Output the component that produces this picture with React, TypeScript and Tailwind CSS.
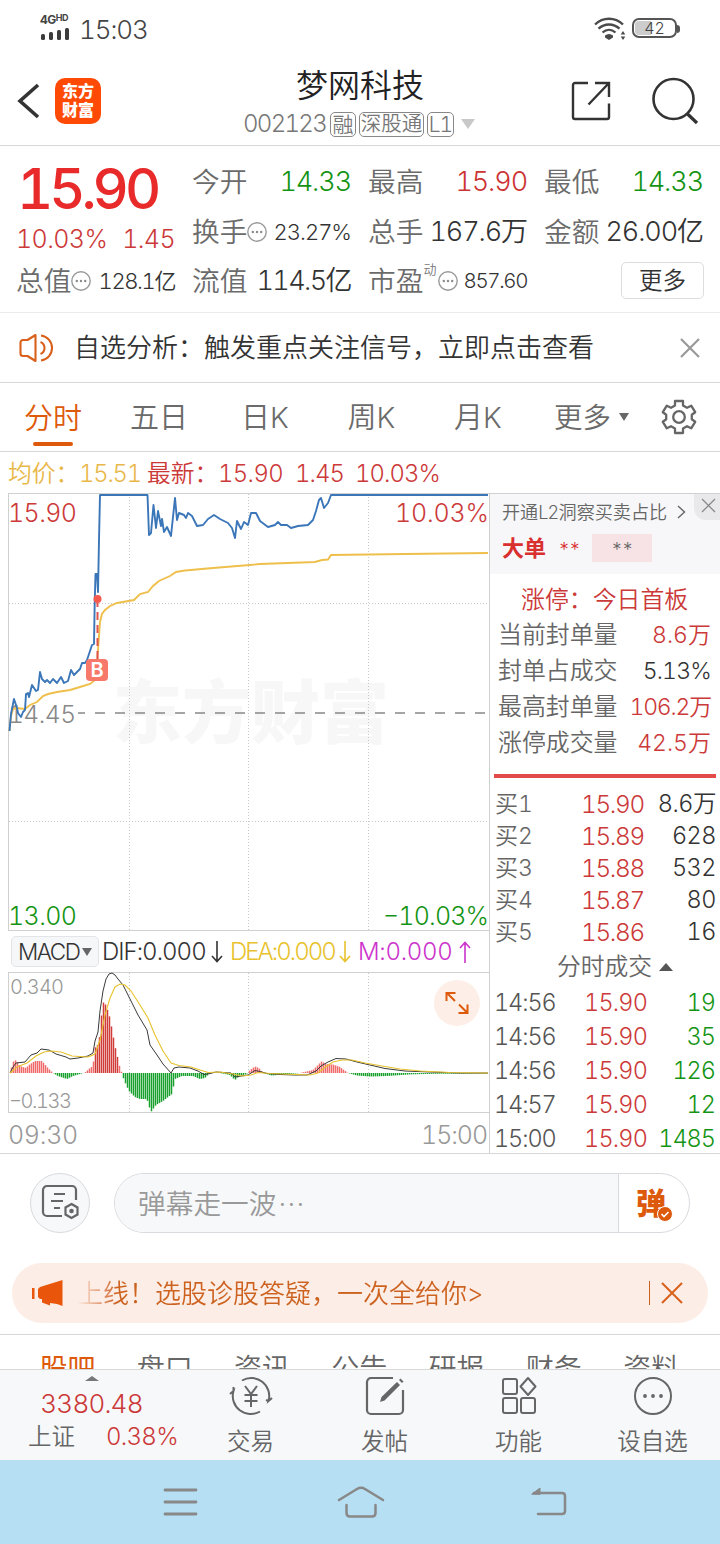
import React from 'react';

type Pt = [number, number];

const toPath = (pts: Pt[]) => pts.map(([x, y], i) => `${i ? 'L' : 'M'}${x} ${y}`).join('');

const PRICE: Pt[] = [
  [9.5, 731], [11, 714], [14, 699], [17, 708], [18, 713], [21, 717], [23, 712], [25, 710], [26, 694], [28, 693],
  [29, 697], [32, 685], [36, 691], [38, 690], [40, 672], [42, 679], [45, 682], [47, 680], [50, 683], [53, 679],
  [57, 683], [61, 677], [64, 683], [68, 681], [71, 670], [74, 675], [80, 669], [82, 663], [85, 663], [87, 660],
  [92, 645], [94, 644], [94.7, 603], [95.5, 574], [97, 574], [98, 592], [99, 540], [100, 495], [147.5, 495],
  [149, 535], [151, 533], [153.5, 505], [156, 528], [158, 511], [161, 526], [162, 519], [164, 532], [167, 527],
  [171, 536], [175, 498], [177, 520], [179, 513], [184, 515], [186, 518], [188, 513], [192, 516], [197, 526],
  [203, 525], [208, 519], [214, 515], [220, 519], [228, 523], [232, 528], [235, 538], [237, 521], [241, 529],
  [244, 522], [248, 525], [251, 513], [256, 513], [260, 521], [268, 527], [275, 525], [278, 522], [281, 525],
  [287, 525], [291, 528], [298, 526], [308, 525], [313, 520], [316, 511], [319, 500], [321, 498], [324, 508],
  [328, 503], [331, 495], [488, 495],
];

const AVERAGE: Pt[] = [
  [9.5, 731], [11, 716], [13, 709], [16, 708], [25, 709], [30, 705], [37, 702], [43, 696], [48, 694], [57, 692],
  [70, 690], [80, 687], [90, 684], [95, 680], [97, 665], [98, 650], [100, 622], [102, 614], [105, 610],
  [110, 606], [117, 603], [134, 600], [140, 594], [148, 592], [153, 586], [159, 581], [170, 576], [176, 572],
  [185, 570.5], [213, 568], [250, 565], [260, 564], [315, 562], [322, 560], [328, 559.5], [331, 555],
  [405, 554], [488, 553],
];

const DIF: Pt[] = [
  [10, 1073], [13, 1067], [16, 1063], [25, 1062], [31, 1055], [37, 1053], [41, 1049], [49, 1050], [56, 1054],
  [66, 1057], [70, 1059], [78, 1058], [88, 1056], [93, 1053], [95, 1041], [98, 1032], [100, 1011], [103, 991],
  [106, 979], [109, 974], [112, 973], [115, 975], [118, 979], [123, 985], [130, 999], [138, 1015], [147, 1030],
  [150, 1045], [157, 1055], [163, 1064], [171, 1073], [174, 1068], [179, 1067], [190, 1068], [198, 1071],
  [204, 1074.5], [210, 1073.5], [216, 1072], [231, 1073], [235, 1077], [248, 1075], [255, 1070.5], [260, 1071.5],
  [267, 1073.5], [280, 1074.5], [295, 1075], [307, 1075], [316, 1071], [321, 1066], [328, 1062], [336, 1058.5],
  [346, 1059], [357, 1062], [370, 1065], [385, 1068.5], [405, 1071], [430, 1072], [460, 1073], [488, 1073],
];

const DEA: Pt[] = [
  [10, 1073], [17, 1067], [27, 1063], [36, 1056], [44, 1052], [51, 1051], [61, 1052], [72, 1056], [88, 1057],
  [95, 1054], [100, 1040], [105, 1015], [110, 998], [115, 987], [120, 984], [125, 985], [131, 991], [140, 1005],
  [148, 1018], [155, 1035], [163, 1051], [171, 1063], [179, 1065.5], [191, 1067], [200, 1070], [208, 1072.5],
  [220, 1072], [233, 1074], [242, 1076], [251, 1075], [258, 1072.5], [270, 1073.5], [295, 1074.5], [310, 1075],
  [318, 1073], [324, 1068], [333, 1062], [342, 1060], [352, 1060], [365, 1063], [382, 1066], [400, 1069],
  [420, 1071], [450, 1072.5], [488, 1073],
];

// Histogram envelope: x position and signed height above the zero line.
const ENVELOPE: Pt[] = [
  [10, 0], [13, 11], [16, 13], [20, 7], [26, 5], [29, 8], [35, 12], [42, 12], [48, 5], [53, 0], [58, -3], [67, -6],
  [73, -3], [80, -1], [85, 0.4], [90, 5], [93, 7], [95, 25], [99, 30], [101, 53], [103, 71], [106, 68], [110, 55],
  [115, 27], [120, 5], [122, 0], [124, -7], [129, -18], [135, -24], [140, -26], [147, -26], [149, -33],
  [151, -39], [156, -32], [163, -28], [172, -21], [175, -6], [182, -3], [193, -3], [200, -6], [205, -5], [210, 0],
  [220, 0], [230, -2], [235, -7], [239, -3], [247, -1], [250, 3], [255, 6.5], [259, 5], [263, 0], [272, -2.5],
  [283, -1.5], [300, 0], [313, 3], [318, 8], [322, 12], [325, 9], [333, 8.5], [340, 6], [348, 0], [357, -2.5],
  [370, -3.5], [387, -3], [410, -1.4], [433, -0.8], [488, -0.4],
];

const heightAt = (x: number) => {
  for (let i = 1; i < ENVELOPE.length; i++) {
    const [x0, y0] = ENVELOPE[i - 1];
    const [x1, y1] = ENVELOPE[i];
    if (x <= x1) return y0 + ((y1 - y0) * (x - x0)) / (x1 - x0);
  }
  return 0;
};

const BARS = Array.from({ length: 239 }, (_, i) => 11.5 + i * 2).map((x) => ({ x, h: heightAt(x) }));

const VLINES = [129.5, 248.5, 368.5];

function InfoDot() {
  return (
    <svg className="size-5 shrink-0" viewBox="0 0 20 20">
      <circle cx="10" cy="10" r="9.2" fill="none" stroke="#9a9a9a" strokeWidth="1.4" />
      <g fill="#8a8a8a">
        <circle cx="5.8" cy="10" r="1.2" />
        <circle cx="10" cy="10" r="1.2" />
        <circle cx="14.2" cy="10" r="1.2" />
      </g>
    </svg>
  );
}

function StatusBar() {
  return (
    <div className="flex h-[57px] items-center px-[40px] text-[#444]">
      <div className="flex w-[32px] flex-col pb-[2px]">
        <div className="flex h-[12px] items-start text-[12px] leading-[12px] font-bold tracking-[-0.500px]">
          4G<span className="text-[9px] leading-[8px]">HD</span>
        </div>
        <svg className="mt-px h-[14px] w-[30px]" viewBox="0 0 30 14">
          <g fill="#3c3c3c">
            <rect x="1" y="7" width="4" height="6" rx="1.5" />
            <rect x="9" y="5" width="4" height="8" rx="1.5" />
            <rect x="17" y="3" width="4" height="10" rx="1.5" />
            <rect x="25" y="1" width="4" height="12" rx="1.5" />
          </g>
        </svg>
      </div>
      <span className="ml-[7px] pt-[3px] text-[26px] leading-8 tracking-[-1.100px]">15:03</span>
      <svg className="ml-auto h-6 w-[34px]" viewBox="0 0 34 24">
        <g fill="none" stroke="#4a4a4a" strokeWidth="2.300">
          <path d="M2 7.500C10 -.2 22 -.2 30 7.500" />
          <path d="M5.500 11.700c6-5.600 15-5.600 21 0" />
          <path d="M9.500 15.500c4-3.600 9-3.600 13 0" />
        </g>
        <path d="M12 18.500c2.500-2 5.500-2 8 0v2L16 23l-4-2.500z" fill="#4a4a4a" />
        <path d="M30 14l2.300 3.500h-4.600zM30 23l2.300-3.500h-4.600z" fill="#4a4a4a" />
      </svg>
      <div className="-mt-px ml-[5px] flex h-5 w-[45px] items-center rounded-[7px] border-2 border-[#555] p-px">
        <div className="flex h-full w-full items-center justify-center rounded-[4px] bg-linear-to-r from-[#ccc] from-40% to-white to-40% text-[16px] leading-4">
          42
        </div>
      </div>
      <div className="h-2 w-[3px] rounded-r bg-[#555]" />
    </div>
  );
}

function Header() {
  return (
    <div className="flex h-[89px] items-center border-b border-[#d8d8d8]">
      <svg className="ml-[16px] h-9 w-6" viewBox="0 0 24 36">
        <path d="M22 2L4 18l18 16" fill="none" stroke="#333" strokeWidth="3.600" />
      </svg>
      <div className="ml-[15px] flex h-[46px] w-[46px] flex-col items-center justify-center rounded-[10px] bg-[#ff4a05] text-[16px] leading-[19px] font-black text-white">
        <span>东方</span>
        <span>财富</span>
      </div>
      <div className="ml-[142px] flex w-[232px] flex-col items-center">
        <div className="h-[46px] pl-[2px] text-[32px] leading-[45px] text-[#222]">梦网科技</div>
        <div className="flex h-[30px] items-center gap-[3px] text-[#777]">
          <span className="text-[24px] leading-[30px] tracking-[-1.700px]">002123</span>
          <span className="ml-px flex h-[25px] w-[26px] items-center justify-center rounded-[5px] border border-[#888] text-[21px] leading-none">融</span>
          <span className="flex h-[25px] w-[65px] items-center justify-center rounded-[5px] border border-[#888] text-[20.500px] leading-none">深股通</span>
          <span className="flex h-[25px] w-[27px] items-center justify-center rounded-[5px] border border-[#888] text-[21px] leading-none tracking-[-1px]">L1</span>
          <svg className="ml-[4px] h-[10px] w-[14px]" viewBox="0 0 14 10">
            <path d="M0 0h14L7 10z" fill="#c8c8c8" />
          </svg>
        </div>
      </div>
      <svg className="ml-[96px] size-[40px]" viewBox="0 0 40 40" fill="none" stroke="#333" strokeWidth="2.400">
        <path d="M17 2H4a2 2 0 0 0-2 2v32a2 2 0 0 0 2 2h32a2 2 0 0 0 2-2V22.500M24 2h14v14M38 2L17.500 23.500" />
      </svg>
      <svg className="ml-[40px] size-[48px]" viewBox="0 0 48 48" fill="none" stroke="#333" strokeWidth="2.600">
        <circle cx="22.500" cy="22" r="20" />
        <path d="M36 36.500l10 9.500" strokeWidth="3.200" />
      </svg>
    </div>
  );
}

function Quote({ label, value, tone, size = 'text-[27px] tracking-[-1.100px]', children }: { label: string; value: string; tone: string; size?: string; children?: React.ReactNode }) {
  return (
    <div className="flex items-center">
      <span className="text-[27.700px] leading-9 whitespace-nowrap text-[#6b6b6b]">{label}</span>
      {children}
      <span className={`ml-auto leading-9 whitespace-nowrap ${tone} ${size}`}>{value}</span>
    </div>
  );
}

function Quotes() {
  return (
    <div className="h-[167px] border-b border-[#ececec] pt-[11px] pl-[16px]">
      <div className="grid grid-cols-[159px_159px_159px_159px] grid-rows-[50px_50px_48px] gap-x-[17px]">
        <div className="row-span-2 flex flex-col">
          <div className="h-[65px] pl-px text-[56px] leading-[64px] font-[450] tracking-[-4px] text-[#e92a2a]">15.90</div>
          <div className="flex h-[34px] justify-between text-[25px] leading-[34px] tracking-[-0.600px] text-[#cc3939]">
            <span>10.03%</span>
            <span>1.45</span>
          </div>
        </div>
        <Quote label="今开" value="14.33" tone="text-[#149414]" />
        <Quote label="最高" value="15.90" tone="text-[#cc3333]" />
        <Quote label="最低" value="14.33" tone="text-[#149414]" />
        <Quote label="换手" value="23.27%" tone="text-[#333]" size="text-[22px] tracking-[-1px]"><InfoDot /></Quote>
        <Quote label="总手" value="167.6万" tone="text-[#333]" />
        <Quote label="金额" value="26.00亿" tone="text-[#333]" />
        <Quote label="总值" value="128.1亿" tone="text-[#333]" size="text-[22px] tracking-[-1.400px]"><InfoDot /></Quote>
        <Quote label="流值" value="114.5亿" tone="text-[#333]" size="text-[27px] tracking-[-1.600px]" />
        <Quote label="市盈" value="857.60" tone="text-[#333]" size="text-[20.500px] tracking-[-1.400px]">
          <span className="mb-[24px] text-[13px] leading-none text-[#777]">动</span>
          <span className="ml-[2px] flex"><InfoDot /></span>
        </Quote>
        <div className="flex items-center justify-end">
          <div className="-mt-px -mr-px flex h-[37px] w-[83px] items-center justify-center rounded-[5px] border border-[#ddd] text-[23.500px] leading-none text-[#333]">更多</div>
        </div>
      </div>
    </div>
  );
}

function Notice() {
  return (
    <div className="flex h-[70px] items-center border-b border-[#d8d8d8] px-[19px]">
      <svg className="h-[30px] w-[36px]" viewBox="0 0 36 30" fill="none" stroke="#d9601a" strokeWidth="2.100" strokeLinejoin="round">
        <path d="M16.500 2L8.500 7H4a2.500 2.500 0 0 0-2.500 2.500v11A2.500 2.500 0 0 0 4 23h4.500l8 5z" />
        <path d="M21.500 9a6.500 6.500 0 0 1 0 12M22 2.500a12.600 12.600 0 0 1 0 25" />
      </svg>
      <span className="ml-[19px] text-[26px] leading-9 whitespace-nowrap text-[#333]">自选分析：触发重点关注信号，立即点击查看</span>
      <svg className="ml-auto mr-px size-[20px]" viewBox="0 0 20 20">
        <path d="M1 1l18 18M19 1L1 19" stroke="#999" strokeWidth="2.200" />
      </svg>
    </div>
  );
}

function PeriodTabs() {
  return (
    <div className="flex h-[69px] items-center border-b border-[#d8d8d8] text-[29px] leading-9 whitespace-nowrap text-[#6b6b6b]">
      <div className="flex h-full w-[106px] flex-col items-center pt-[18px] text-[29px] text-[#dd5a0c]">
        <span>分时</span>
        <span className="mt-[5px] h-1 w-10 rounded-full bg-[#dd5a0c]" />
      </div>
      <span className="w-[106px] pt-[2px] text-center">五日</span>
      <span className="w-[106px] pt-[2px] text-center">日K</span>
      <span className="w-[107px] pt-[2px] text-center">周K</span>
      <span className="w-[106px] pt-[2px] text-center">月K</span>
      <span className="ml-[23px] pt-[2px] text-[28.500px]">更多</span>
      <svg className="ml-[8px] h-[8px] w-[10px]" viewBox="0 0 10 8"><path d="M0 0h10L5 8z" fill="#666" /></svg>
      <svg className="ml-[32px] size-[36px]" viewBox="0 0 36 36" fill="none" stroke="#666" strokeWidth="2.300" strokeLinejoin="round">
        <path d="M14 6.500V2h8v4.500l4 2.300 4.200-2.100 4 6.500-3.400 2.500v4.600l3.400 2.500-4 6.500-4.200-2.100-4 2.300V34h-8v-4.500l-4-2.300-4.200 2.100-4-6.500 3.400-2.500v-4.600l-3.400-2.500 4-6.500L10 8.800z" />
        <circle cx="18" cy="18" r="5.800" />
      </svg>
    </div>
  );
}

function Legend() {
  return (
    <div className="flex h-[41px] items-center pt-[2px] pl-[8px] text-[23.800px] leading-8 whitespace-nowrap">
      <span className="w-[71px] text-[#e9b84a]">均价：</span>
      <span className="w-[68px] tracking-[-1.200px] text-[#e9b84a]">15.51</span>
      <span className="w-[71px] text-[#cc3939]">最新：</span>
      <span className="w-[77px] tracking-[-0.600px] text-[#cc3939]">15.90</span>
      <span className="w-[60px] tracking-[-0.900px] text-[#cc3939]">1.45</span>
      <span className="tracking-[-0.900px] text-[#cc3939]">10.03%</span>
    </div>
  );
}

function PriceChart() {
  return (
    <svg className="block h-[438px] w-[489px]" viewBox="0 493 489 438">
      <g fill="#f7f7f7" fontSize="69" fontWeight="900">
        <text x="113" y="738">东方财富</text>
      </g>
      <g stroke="#c8c8c8" fill="none">
        <path d="M8.500 493v438M8 493.500h481M8 930.500h481" stroke="#d0d0d0" />
        {VLINES.map((x) => <path key={x} d={`M${x} 494v436`} strokeDasharray="1 2" />)}
        <path d="M9 603.500h479M9 821.500h479" strokeDasharray="1 2" />
      </g>
      <text x="8" y="722.500" fontSize="24.500" fill="#888" textLength="68">14.45</text>
      <path d="M78 713H489" stroke="#888" strokeWidth="1.700" strokeDasharray="10 10" strokeDashoffset="3" />
      <path d={toPath(AVERAGE)} fill="none" stroke="#efbf4c" strokeWidth="1.900" />
      <path d={toPath(PRICE)} fill="none" stroke="#3b76b8" strokeWidth="1.900" strokeLinejoin="round" />
      <path d="M97.500 599v60" stroke="#e0564f" strokeWidth="2" strokeDasharray="8 5" />
      <circle cx="97.500" cy="599" r="4" fill="#f55a4e" />
      <rect x="86" y="659" width="22" height="22" rx="4" fill="#f8796a" />
      <text x="97" y="677" fontSize="20" fontWeight="600" fill="#fff" textAnchor="middle">B</text>
      <text x="8" y="522" fontSize="25" fill="#cc3939" textLength="69">15.90</text>
      <text x="395" y="522" fontSize="25" fill="#cc3939" textLength="94">10.03%</text>
      <text x="8" y="924.500" fontSize="25" fill="#149414" textLength="69">13.00</text>
      <text x="383" y="924.500" fontSize="25" fill="#149414" textLength="106">−10.03%</text>
    </svg>
  );
}

function Arrow({ up, color }: { up?: boolean; color: string }) {
  return (
    <svg className="h-[22px] w-[12px]" viewBox="0 0 12 22" fill="none" stroke={color} strokeWidth="1.600">
      <path d={up ? 'M6 22V2M1 7l5-5.500L11 7' : 'M6 0v20M1 15l5 5.500L11 15'} />
    </svg>
  );
}

function MacdRow() {
  return (
    <div className="flex h-[41px] items-center pl-[11px] text-[24px] leading-8 whitespace-nowrap">
      <div className="flex h-[31px] w-[88px] items-center gap-[4px] rounded-[5px] border border-[#e2e4e8] bg-[#f6f7f9] pl-[6px] text-[22.500px] tracking-[-1.500px] text-[#333]">
        <span className="w-[60px]">MACD</span>
        <svg className="h-[8px] w-[10px]" viewBox="0 0 10 8"><path d="M0 0h10L5 8z" fill="#666" /></svg>
      </div>
      <div className="flex w-[124px] items-center justify-between pl-[3px] text-[#333]">
        <span className="tracking-[-1px]">DIF:0.000</span>
        <Arrow color="#333" />
      </div>
      <div className="flex w-[128px] items-center justify-between pl-[7px] text-[#e8c22e]">
        <span className="tracking-[-2px]">DEA:0.000</span>
        <Arrow color="#e8c22e" />
      </div>
      <div className="flex w-[120px] items-center justify-between pl-[7px] text-[#cc33cc]">
        <span className="tracking-[-0.300px]">M:0.000</span>
        <Arrow up color="#cc33cc" />
      </div>
    </div>
  );
}

function MacdChart() {
  return (
    <svg className="block h-[141px] w-[489px]" viewBox="0 972 489 141">
      <path d="M8.500 972v141M8 972.500h481M8 1112.500h481" stroke="#d0d0d0" />
      {VLINES.map((x) => <path key={x} d={`M${x} 973v139`} stroke="#c8c8c8" strokeDasharray="1 2" />)}
      {BARS.map(({ x, h }) => (
        <path key={x} d={`M${x} 1073v${-h}`} stroke={h > 0 ? (h > 14 ? '#d03c3a' : '#f06a6a') : '#18a02c'} strokeWidth="1.500" />
      ))}
      <path d={toPath(DIF)} fill="none" stroke="#3a3a3a" strokeWidth="1" />
      <path d={toPath(DEA)} fill="none" stroke="#e8c22e" strokeWidth="1.100" />
      <text x="10" y="994" fontSize="20" fill="#999" textLength="54">0.340</text>
      <text x="9" y="1107.500" fontSize="20" fill="#999" textLength="63">−0.133</text>
      <circle cx="457" cy="1003" r="23" fill="#fdefe7" />
      <g fill="none" stroke="#dd5a0c" strokeWidth="2">
        <path d="M446.500 1001v-8h9M447 993l8 8" />
        <path d="M467.500 1004.500v8.500h-9M467 1012.500l-8-8" />
      </g>
    </svg>
  );
}

const STATS = [
  ['当前封单量', '8.6万', 'text-[#cc3939]'],
  ['封单占成交', '5.13%', 'text-[#333] tracking-[-0.800px]'],
  ['最高封单量', '106.2万', 'text-[#cc3939] tracking-[-1.200px]'],
  ['涨停成交量', '42.5万', 'text-[#cc3939]'],
];

const BIDS = [
  ['买1', '15.90', '8.6万'],
  ['买2', '15.89', '628'],
  ['买3', '15.88', '532'],
  ['买4', '15.87', '80'],
  ['买5', '15.86', '16'],
];

const TRADES = [
  ['14:56', '15.90', '19'],
  ['14:56', '15.90', '35'],
  ['14:56', '15.90', '126'],
  ['14:57', '15.90', '12'],
  ['15:00', '15.90', '1485'],
];

function SidePanel() {
  return (
    <div className="flex w-[231px] flex-col border-t border-l border-[#d0d0d0] whitespace-nowrap [&>*]:shrink-0">
      <div className="relative h-[80px] bg-[#f7f7f9] pl-[12px]">
        <div className="flex h-[36px] items-center text-[18.100px] leading-none text-[#666]">
          <span>开通<span className="tracking-[-0.800px]">L2</span>洞察买卖占比</span>
          <svg className="ml-[10px] h-[14px] w-[9px]" viewBox="0 0 9 14"><path d="M1 1l6.500 6L1 13" fill="none" stroke="#666" strokeWidth="1.400" /></svg>
        </div>
        <div className="flex h-[36px] items-center text-[22px] leading-none text-[#d92f2f]">
          <span className="font-bold">大单</span>
          <span className="ml-[12px] pt-[2px] text-[19px] leading-none tracking-[-1.500px]">**</span>
          <span className="ml-[12px] flex h-[28px] w-[60px] items-center justify-center bg-[#f7e3e5] pt-[2px] text-[19px] tracking-[-1.500px] text-[#666]">**</span>
        </div>
        <div className="absolute top-0 right-0 flex h-[26px] w-[26px] items-center justify-center rounded-bl-[12px] bg-[#e9e9eb]">
          <svg className="-mt-[3px] ml-[3px] size-[15px]" viewBox="0 0 15 15"><path d="M1 1l13 13M14 1L1 14" stroke="#888" strokeWidth="1.300" /></svg>
        </div>
      </div>
      <div className="pt-[9px] pr-[9px] pl-[8px] text-[23.900px]">
        <div className="h-[34px] pl-[23px] leading-[34px] text-[#cc3939]">涨停：今日首板</div>
        {STATS.map(([label, value, tone]) => (
          <div key={label} className="flex h-[36px] items-center justify-between leading-9">
            <span className="text-[#666]">{label}</span>
            <span className={`${tone} text-[23px]`}>{value}</span>
          </div>
        ))}
      </div>
      <div className="mt-[13px] ml-[4px] h-1 w-[222px] bg-[#e34b4b]" />
      <div className="mt-[10px] pr-[4px] pl-[5px] text-[24.300px]">
        {BIDS.map(([label, price, volume]) => (
          <div key={label} className="flex h-[32px] items-center leading-8">
            <span className="w-[86px] text-[23px] text-[#666]">{label}</span>
            <span className="tracking-[-1.300px] text-[#cc3939]">{price}</span>
            <span className="ml-auto text-[23.500px] tracking-[-0.500px] text-[#333]">{volume}</span>
          </div>
        ))}
      </div>
      <div className="flex h-[38px] items-center justify-center gap-[7px] pb-px pl-[20px] text-[23.800px] leading-none text-[#666]">
        分时成交
        <svg className="h-[8px] w-[14px]" viewBox="0 0 14 8"><path d="M0 8h14L7 0z" fill="#555" /></svg>
      </div>
      <div className="pr-[5px] pl-[4px] text-[23.500px]">
        {TRADES.map(([time, price, volume], i) => (
          <div key={i} className="flex h-[34px] items-center leading-8">
            <span className="w-[90px] tracking-[-1.100px] text-[#555]">{time}</span>
            <span className="tracking-[-0.800px] text-[#cc3939]">{price}</span>
            <span className="ml-auto tracking-[-1px] text-[#149414]">{volume}</span>
          </div>
        ))}
      </div>
    </div>
  );
}

function Danmaku() {
  return (
    <div className="flex h-[109px] items-start pt-[19px] pl-[30px]">
      <div className="flex size-[60px] items-center justify-center rounded-full border border-[#d8dade] bg-[#f7f8fa]">
        <svg className="size-[38px]" viewBox="0 0 38 38" fill="none" stroke="#666" strokeWidth="2.200">
          <path d="M35 16V6a4 4 0 0 0-4-4H6a4 4 0 0 0-4 4v22a4 4 0 0 0 4 4h15M13 10h11M10 17h12M13 24h6" />
          <path d="M30.500 20l6 3.500v7l-6 3.500-6-3.500v-7z" />
          <circle cx="30.500" cy="27" r="1.200" />
        </svg>
      </div>
      <div className="ml-[24px] flex h-[60px] w-[576px] overflow-hidden rounded-full border border-[#d8dade]">
        <div className="flex flex-1 items-center bg-[#f7f8fa] pt-[3px] pl-[23px] text-[27.700px] leading-none text-[#999]">
          弹幕走一波<span className="ml-[2px] tracking-[1.200px]">···</span>
        </div>
        <div className="relative flex w-[71px] items-center border-l border-[#d8dade] pl-[17px] text-[30px] leading-none font-black text-[#dd5a0c]">
          弹
          <svg className="absolute top-[32px] left-[38px] size-[16px]" viewBox="0 0 16 16">
            <circle cx="8" cy="8" r="7.500" fill="#dd5a0c" stroke="#fff" />
            <path d="M4.500 8l2.500 2.500L11.500 6" fill="none" stroke="#fff" strokeWidth="1.600" />
          </svg>
        </div>
      </div>
    </div>
  );
}

function Banner() {
  return (
    <div className="h-[72px] border-b border-[#d8d8d8] px-[12px]">
      <div className="flex h-[60px] items-center rounded-full bg-[#fceee6] pl-[20px] text-[#cd6220]">
        <svg className="h-[28px] w-[31px]" viewBox="0 0 31 28" fill="#e9560b">
          <path d="M0 9h2.500v11H0zM8 8L30.500 1v26L25 25l-7-1v2.500l-8-3V20H8l-2-2v-8z" />
        </svg>
        <span className="ml-[14px] bg-linear-to-r from-[#fceee6] to-[#cd6220] to-[40px] bg-clip-text pt-[2px] text-[26px] leading-9 whitespace-nowrap text-transparent">
          上线！选股诊股答疑，一次全给你&gt;
        </span>
        <div className="ml-auto h-6 w-px bg-[#cd6220]" />
        <svg className="mr-[25px] ml-[11px] size-[22px]" viewBox="0 0 22 22"><path d="M1 1l20 20M21 1L1 21" stroke="#d9601a" strokeWidth="2" /></svg>
      </div>
    </div>
  );
}

function SectionTabs() {
  return (
    <div className="flex h-[34px] overflow-hidden pt-[15px] pl-[19px] text-[28px] leading-[38px] text-[#666]">
      <span className="w-[97px] shrink-0 text-center font-normal text-[#dd5a0c]">股吧</span>
      {['盘口', '资讯', '公告', '研报', '财务', '资料'].map((t) => (
        <span key={t} className="w-[97.300px] shrink-0 text-center">{t}</span>
      ))}
    </div>
  );
}

function BottomBar() {
  const item = 'flex w-[134px] flex-col items-center pt-[6px] pl-px';
  const label = 'mt-[8px] text-[23.500px] leading-9';
  return (
    <div className="flex h-[91px] border-t border-[#d8d8d8] bg-[#f7f8fa] text-[#666]">
      <div className="flex w-[183px] flex-col items-center pt-[6px]">
        <svg className="h-[5px] w-[14px]" viewBox="0 0 14 5"><path d="M0 5h14L7 0z" fill="#777" /></svg>
        <span className="mt-[6px] h-[33px] text-[26px] leading-[34px] tracking-[-0.800px] text-[#cc3939]">3380.48</span>
        <div className="flex h-[34px] w-full items-center justify-between pr-[5px] pl-[28px] text-[23.500px] leading-8">
          <span>上证</span>
          <span className="text-[24px] tracking-[-0.700px] text-[#cc3939]">0.38%</span>
        </div>
      </div>
      <div className={item}>
        <svg className="h-[40px] w-[44px]" viewBox="0 0 44 40" fill="none" stroke="#666" strokeWidth="2">
          <path d="M13 4.500A18 18 0 0 1 39.500 25l3.500-3M39.500 25l-2.500-1M31 35.500A18 18 0 0 1 4.500 15L1 18M4.500 15V11" />
          <path d="M16 10l6 8 6-8M22 18v13M15.500 19h13M15.500 25h13" />
        </svg>
        <span className={label}>交易</span>
      </div>
      <div className={item}>
        <svg className="size-[40px]" viewBox="0 0 40 40" fill="none" stroke="#666" strokeWidth="2.200">
          <path d="M28 2H6a4 4 0 0 0-4 4v28a4 4 0 0 0 4 4h28a4 4 0 0 0 4-4V14" />
          <path d="M15 26l1.500-5L32 6l3 3-15.500 15.500zM34 4l1.500-1.500 3 3L37 7z" fill="#666" stroke="none" />
        </svg>
        <span className={label}>发帖</span>
      </div>
      <div className={item}>
        <svg className="size-[40px]" viewBox="0 0 40 40" fill="none" stroke="#666" strokeWidth="2">
          <rect x="4" y="3" width="14" height="15" rx="2" />
          <rect x="4" y="22" width="14" height="15" rx="2" />
          <rect x="22" y="22" width="14" height="15" rx="2" />
          <path d="M29 2l7.500 8.500L29 19l-7.500-8.500z" strokeLinejoin="round" />
        </svg>
        <span className={label}>功能</span>
      </div>
      <div className={item}>
        <svg className="size-[40px]" viewBox="0 0 40 40">
          <circle cx="20" cy="20" r="18" fill="none" stroke="#666" strokeWidth="2" />
          <g fill="#666"><circle cx="12" cy="20" r="1.900" /><circle cx="20" cy="20" r="1.900" /><circle cx="28" cy="20" r="1.900" /></g>
        </svg>
        <span className={label}>设自选</span>
      </div>
    </div>
  );
}

function SystemNav() {
  return (
    <div className="flex h-[84px] items-center bg-[#b6dff3] pl-[163px]">
      <svg className="h-[30px] w-[35px]" viewBox="0 0 35 30" stroke="#888" strokeWidth="2.800" strokeLinecap="round">
        <path d="M2 3h31M2 15h31M2 27h31" />
      </svg>
      <svg className="ml-[139px] h-[34px] w-[48px]" viewBox="0 0 48 34" fill="none" stroke="#888" strokeWidth="2.500" strokeLinecap="round">
        <path d="M2 15L20 4q4-2.500 8 0L46 15M9.500 20v8q0 3.500 3.500 3.500h22q3.500 0 3.500-3.500v-8" />
      </svg>
      <svg className="ml-[146px] h-[32px] w-[36px]" viewBox="0 0 36 32" fill="none" stroke="#888" strokeWidth="2.500" strokeLinecap="round">
        <path d="M3 7h28q3 0 3 3v15q0 3-3 3H7" />
        <path d="M1 8l8-6v6z" fill="#888" strokeWidth="1" />
      </svg>
    </div>
  );
}

export default function App() {
  return (
    <div className="flex h-[1544px] w-[720px] flex-col overflow-hidden bg-white font-['Inter','Noto_Sans_CJK_SC',sans-serif] font-[350] tabular-nums [&>*]:shrink-0">
      <StatusBar />
      <Header />
      <Quotes />
      <Notice />
      <PeriodTabs />
      <Legend />
      <div className="flex h-[661px] border-b border-[#d8d8d8]">
        <div className="w-[489px]">
          <PriceChart />
          <MacdRow />
          <MacdChart />
          <div className="flex h-[40px] items-center justify-between pt-[4px] pr-[2px] pl-[8px] text-[25px] leading-8 text-[#999]">
            <span className="tracking-[-0.300px]">09:30</span>
            <span className="tracking-[-1.100px]">15:00</span>
          </div>
        </div>
        <SidePanel />
      </div>
      <Danmaku />
      <Banner />
      <SectionTabs />
      <BottomBar />
      <SystemNav />
    </div>
  );
}
